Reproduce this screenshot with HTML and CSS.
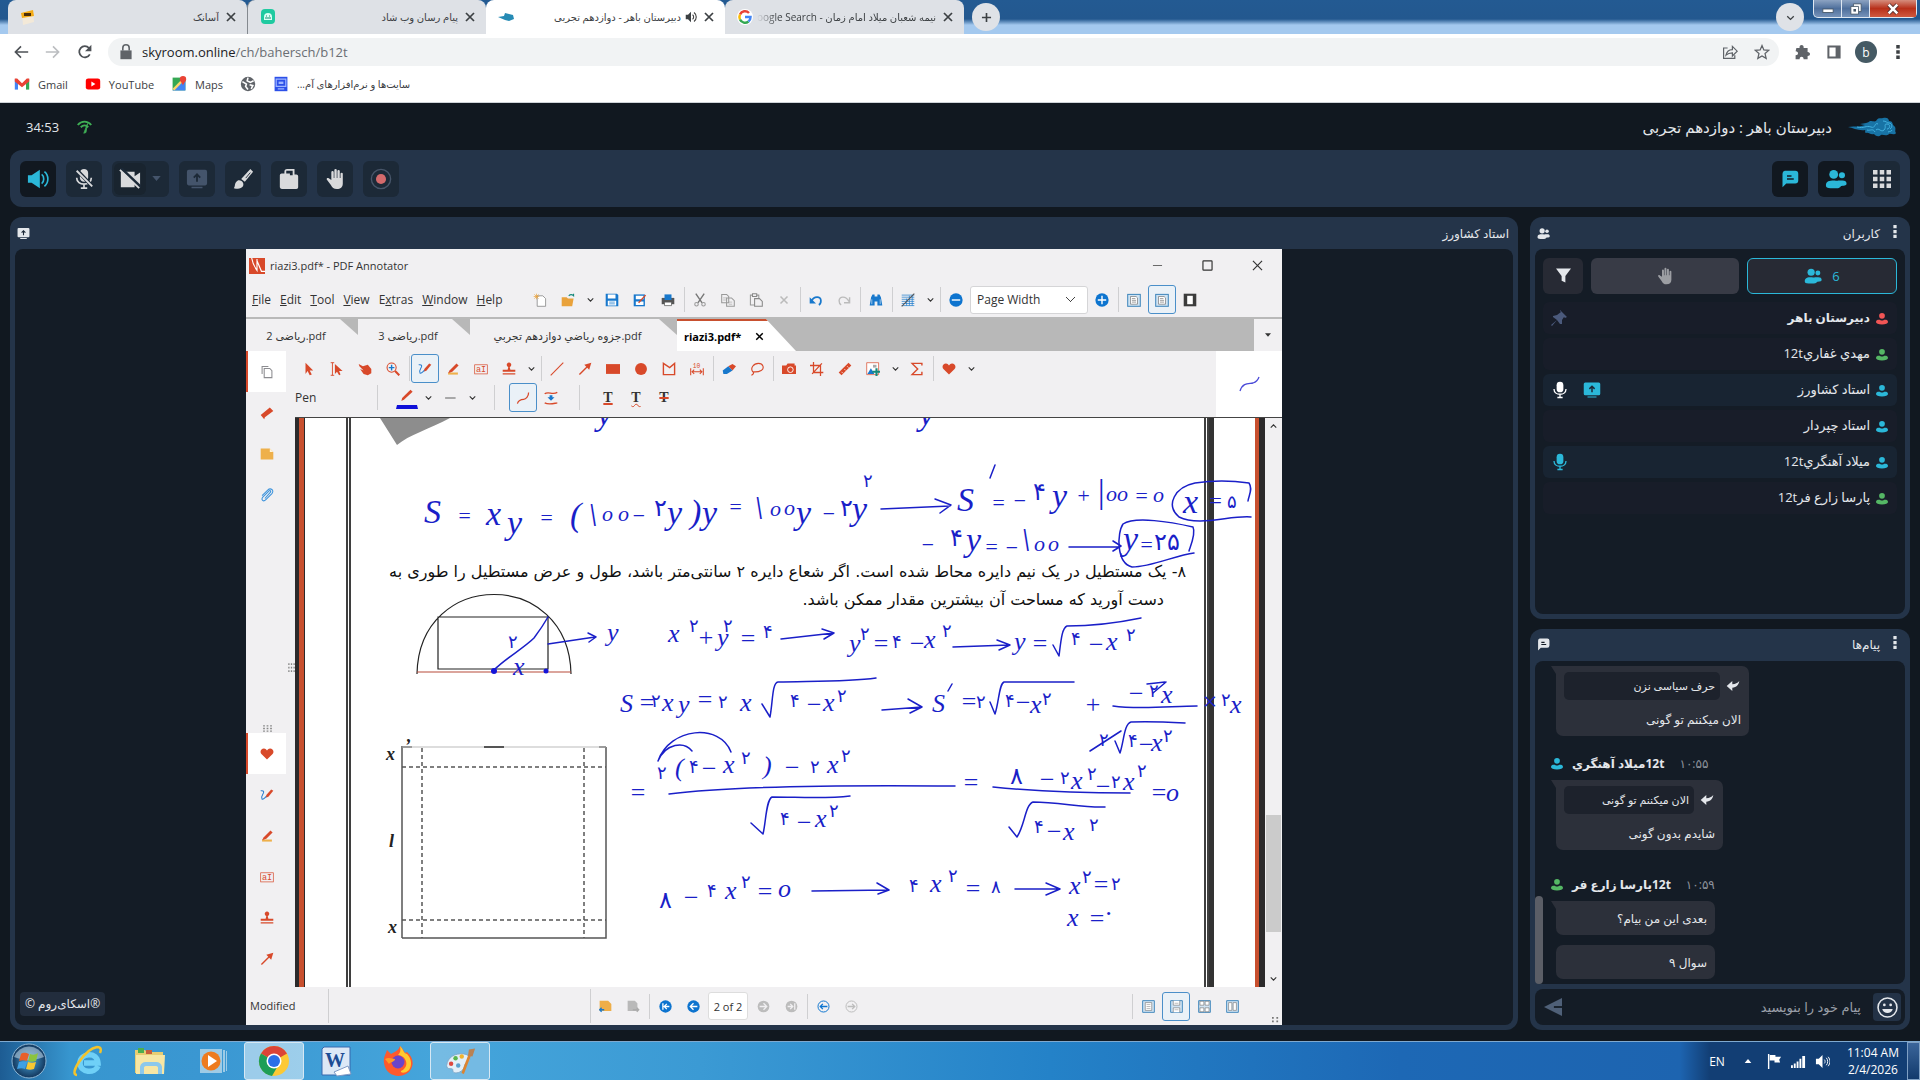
FILE: index.html
```html
<!DOCTYPE html>
<html lang="fa">
<head>
    <meta charset="UTF-8">
    <meta name="viewport" content="width=device-width, initial-scale=1.0">
    <title>دبیرستان باهر - دوازدهم تجربی</title>
    <link rel="stylesheet" href="styles.css">
</head>
<body>
    <!-- shared icons -->
    <svg class="sprite" aria-hidden="true">
        <symbol id="i-close" viewBox="0 0 20 20"><path d="M5 5l10 10M15 5L5 15" fill="none" stroke="currentColor" stroke-width="2.2"/></symbol>
        <symbol id="i-chev" viewBox="0 0 20 20"><path d="M5 8l5 5 5-5" fill="none" stroke="currentColor" stroke-width="2"/></symbol>
        <symbol id="i-users" viewBox="0 0 24 24"><circle cx="9.500" cy="7" r="4.800"/><circle cx="18.500" cy="8" r="3.300"/><path d="M1 19c0-5 4-5.500 8.500-5.500 3 0 3.500 1 5 0h4.500c3 0 4.500 1 4.500 3.500 0 2-1.500 2.500-5.500 2.500-1 0-1.500 2.500-5 2.500H6c-3.500 0-5-1-5-3z"/></symbol>
        <symbol id="i-user" viewBox="0 0 20 20"><circle cx="10" cy="5.500" r="4.800"/><path d="M0 16c0-3 2-4 5-4 2 0 3 1.300 5 1.300S13 12 15 12c3 0 5 1 5 4 0 2.500-4 4-10 4S0 18.500 0 16z"/></symbol>
        <symbol id="i-chat" viewBox="0 0 24 24"><path d="M5 1h14a4 4 0 0 1 4 4v9a4 4 0 0 1-4 4H7l-5 5V5a4 4 0 0 1 3-4z"/><path d="M8 8h6M8 12h9" stroke="#141c26" stroke-width="2"/></symbol>
        <symbol id="i-hand" viewBox="0 0 24 24"><path d="M8 13V4.500a1.300 1.300 0 0 1 2.600 0V11h.7V2.300a1.300 1.300 0 0 1 2.600 0V11h.7V3.500a1.300 1.300 0 0 1 2.600 0V11h.8V6a1.300 1.300 0 0 1 2.500 0v11c0 4-2.500 6-6.500 6-3.500 0-5-1.500-6.500-4.500L3 12.500c-.5-1.500 1-2.300 2.200-1.200z"/></symbol>
        <symbol id="i-mic" viewBox="0 0 24 24"><rect x="7.500" y="1" width="9" height="14" rx="4.500"/><path d="M4 10.500c0 9.500 16 9.500 16 0M12 18v4M8.500 22h7" fill="none" stroke="currentColor" stroke-width="1.800"/></symbol>
        <symbol id="i-share" viewBox="0 0 24 24"><path d="M3 2h18a2 2 0 0 1 2 2v13a2 2 0 0 1-2 2H3a2 2 0 0 1-2-2V4a2 2 0 0 1 2-2zM6 20.500h12V22H6z"/><path d="M12 15V7M8.500 10.500L12 7l3.500 3.500" fill="none" stroke="#1c2937" stroke-width="2"/></symbol>
        <symbol id="i-dots" viewBox="0 0 4 16"><path d="M0 0h4v4H0zM0 6h4v4H0zM0 12h4v4H0z"/></symbol>
        <symbol id="i-reply" viewBox="0 0 20 20"><path d="M1 10l8-7v4.500c5 0 7-1.500 10-4.500-1 6-4 9-10 9.500V17z"/></symbol>
        <symbol id="p-pen" viewBox="0 0 20 20"><path d="M8 14l1-4 7-8 3 2-7 8.500z" fill="#d8492a"/><path d="M1 4c5-1 5 2 3 5s-2 5-1 7c2 1 3-1 6-4" fill="none" stroke="#2b7fd0" stroke-width="1.500"/></symbol>
        <symbol id="p-mark" viewBox="0 0 20 20"><path d="M3 15h14v3H3z" fill="#eeb04b"/><path d="M5 12L15 2l3 3-9 9-6 2z" fill="#d8492a"/></symbol>
        <symbol id="p-text" viewBox="0 0 20 20"><rect x="1" y="4" width="18" height="13" fill="none" stroke="#d8492a"/><text x="3" y="14" class="gl">aI</text></symbol>
        <symbol id="p-stamp" viewBox="0 0 20 20"><path d="M1 16h18v2H1zM1 14v-3h7l1-4a3.200 3.200 0 1 1 2 0l1 4h7v3z" fill="#d8492a"/></symbol>
        <symbol id="p-arrow" viewBox="0 0 20 20"><path d="M2 18L15 5" stroke="#d8492a" stroke-width="2"/><path d="M19 1l-3 10-7-7z" fill="#d8492a"/></symbol>
        <symbol id="p-heart" viewBox="0 0 20 20"><path d="M10 18L2 10C-1 6 2 2 5.500 2 8 2 9.500 4 10 5c.5-1 2-3 4.500-3C18 2 21 6 18 10z" fill="#d8492a"/></symbol>
        <symbol id="p-copy" viewBox="0 0 20 20"><path d="M3 13V2h9M6 5h8l3 3v10H6z" fill="none" stroke="#8c8c90" stroke-width="1.500"/></symbol>
        <symbol id="p-page" viewBox="0 0 20 20"><rect x="1" y="2" width="18" height="17" fill="#cfe3f3" stroke="#4489bd" stroke-width="1.500"/><path d="M5 5h8l2 2v9H5z" fill="#fff" stroke="#777"/><path d="M7 8h5M7 10.500h6M7 13h6" stroke="#777"/></symbol>
    </svg>

    <header class="browser">
        <div class="tab-strip">
            <div class="tab">
                <svg class="favicon" viewBox="0 0 16 16"><path d="M2 4l11-3 1 12-11 3z" fill="#f3e9d8"/><path d="M1 4l12-3 1 6L2 9z" fill="#f3ab16"/><path d="M4 4h7v3H4z" fill="#4b2d08"/></svg>
                <span class="tab-title" dir="rtl">آسانک</span>
                <button class="tab-x" aria-label="Close tab"><svg><use href="#i-close"/></svg></button>
            </div>
            <div class="tab tab-line">
                <svg class="favicon" viewBox="0 0 16 16"><rect x="1" width="14" height="15" rx="4" fill="#1fcaa0"/><path d="M4 8a4 4 0 0 1 8 0v3H4z" fill="#d9fff4"/><path d="M5 9h6M6 7h1M9 7h1" stroke="#178f72"/></svg>
                <span class="tab-title" dir="rtl">پیام رسان وب شاد</span>
                <button class="tab-x" aria-label="Close tab"><svg><use href="#i-close"/></svg></button>
            </div>
            <div class="tab tab-active">
                <svg class="favicon" viewBox="0 0 16 16"><path d="M0 8l6-1 1-3 4 1 4 1 1 4-5 2-4-1z" fill="#268bb5"/></svg>
                <span class="tab-title" dir="rtl">دبیرستان باهر - دوازدهم تجربی</span>
                <svg class="speaker" viewBox="0 0 16 16"><path d="M1 5h3l4-4v14l-4-4H1z"/><path d="M10 5c2 1 2 5 0 6M12 2c4 3 4 9 0 12" fill="none" stroke="#444" stroke-width="1.500"/></svg>
                <button class="tab-x" aria-label="Close tab"><svg><use href="#i-close"/></svg></button>
            </div>
            <div class="tab">
                <svg class="favicon" viewBox="0 0 16 16"><rect width="16" height="16" rx="8" fill="#fff"/><g fill="none" stroke-width="2.500"><path d="M12 4a5.500 5.500 0 0 0-9 1.500" stroke="#ea4335"/><path d="M3 5.500a5.500 5.500 0 0 0 0 5" stroke="#fbbc05"/><path d="M3 10.500a5.500 5.500 0 0 0 8.500 2" stroke="#34a853"/><path d="M11.500 12.500c1.500-1 2-2.500 2-4.500H8" stroke="#4285f4"/></g></svg>
                <span class="tab-title tab-fade" dir="rtl">نیمه شعبان میلاد امام زمان - Google Search</span>
                <button class="tab-x" aria-label="Close tab"><svg><use href="#i-close"/></svg></button>
            </div>
            <button class="round-btn" aria-label="New tab"><svg viewBox="0 0 20 20"><path d="M10 3v14M3 10h14" stroke="#3c4043" stroke-width="2.500"/></svg></button>
            <button class="round-btn tab-search" aria-label="Search tabs"><svg><use href="#i-chev"/></svg></button>
            <div class="win-controls">
                <button aria-label="Minimize"><svg viewBox="0 0 20 14"><rect x="4" y="7" width="12" height="4" fill="#fff" stroke="#456"/></svg></button>
                <button aria-label="Restore"><svg viewBox="0 0 20 14"><path d="M7 1h9v9H7z" fill="#fff" stroke="#456"/><path d="M4 4h9v9H4z" fill="#fff" stroke="#456"/><path d="M7 7h3v3H7z" fill="#456"/></svg></button>
                <button class="win-close" aria-label="Close"><svg viewBox="0 0 20 14"><path d="M5 2l10 10M15 2L5 12" stroke="#533" stroke-width="5"/><path d="M5 2l10 10M15 2L5 12" stroke="#fff" stroke-width="3"/></svg></button>
            </div>
        </div>
        <div class="nav-bar">
            <button aria-label="Back"><svg viewBox="0 0 20 20"><path d="M19 10H3M10 3l-7 7 7 7" fill="none" stroke="#4d5156" stroke-width="2"/></svg></button>
            <button aria-label="Forward"><svg viewBox="0 0 20 20"><path d="M1 10h16M10 3l7 7-7 7" fill="none" stroke="#bbbdc0" stroke-width="2"/></svg></button>
            <button aria-label="Reload"><svg viewBox="0 0 20 20"><path d="M16 13a7 7 0 1 1-1-8l2 2" fill="none" stroke="#4d5156" stroke-width="2.200"/><path d="M18 1v8h-8z" fill="#4d5156"/></svg></button>
            <div class="omnibox">
                <svg viewBox="0 0 20 20"><path d="M3 8h14v11H3z" fill="#5f6368"/><path d="M6 8V5a4 4 0 0 1 8 0v3" fill="none" stroke="#5f6368" stroke-width="2"/></svg>
                <span class="url">skyroom.online<span>/ch/bahersch/b12t</span></span>
                <svg viewBox="0 0 20 20"><path d="M7 5H2v13h14v-4M5 14c1-5 4-7 8-7V3l6 6-6 6v-4c-4 0-6 1-8 3z" fill="none" stroke="#5f6368" stroke-width="1.500"/></svg>
                <svg viewBox="0 0 20 20"><path d="M10 2l2.300 5.500 6 .5-4.500 4 1.400 6L10 15l-5.200 3 1.400-6-4.500-4 6-.5z" fill="none" stroke="#5f6368" stroke-width="1.600"/></svg>
            </div>
            <button aria-label="Extensions"><svg viewBox="0 0 20 20"><path d="M3 5h4c-1-5 6-5 5 0h5v5c4 0 4 5 0 5v4h-5c0-4-5-4-5 0H2v-5c4 0 4-5 0-5z" fill="#5f6368"/></svg></button>
            <button aria-label="Side panel"><svg viewBox="0 0 20 20"><path d="M3 3h14v14H3z" fill="none" stroke="#5f6368" stroke-width="2.500"/><path d="M12 3h5v14h-5z" fill="#5f6368"/></svg></button>
            <button class="avatar">b</button>
            <button aria-label="Menu"><svg class="kebab"><use href="#i-dots"/></svg></button>
        </div>
        <nav class="bookmarks">
            <a href="#"><svg viewBox="0 0 20 16"><path d="M1 15V2h4v13z" fill="#4285f4"/><path d="M15 15V2h4v13z" fill="#34a853"/><path d="M1 5V1h3l6 6 6-6h3v4l-9 7z" fill="#ea4335"/></svg>Gmail</a>
            <a href="#"><svg viewBox="0 0 20 16"><rect x="1" y="1" width="18" height="14" rx="3" fill="#f00"/><path d="M8 5v6l5-3z" fill="#fff"/></svg>YouTube</a>
            <a href="#"><svg viewBox="0 0 20 20"><path d="M2 2h16v16H2z" fill="#34a853"/><path d="M2 18L18 3v15z" fill="#4285f4"/><path d="M3 17L17 3" stroke="#fbd66b" stroke-width="3"/><path d="M15 0a4 4 0 0 1 4 4c0 3-3 4-4 8-1-4-4-5-4-8a4 4 0 0 1 4-4z" fill="#ea4335"/></svg>Maps</a>
            <a href="#" aria-label="Bookmark"><svg viewBox="0 0 20 20"><circle cx="10" cy="10" r="9" fill="#5f6368"/><path d="M3 7l5 3-1 3 3 4M10 2l-1 4 4 2 4-2M12 11l4 1-2 4" fill="none" stroke="#fff" stroke-width="2"/></svg></a>
            <a href="#"><svg viewBox="0 0 20 20"><path d="M2 1h16v18H2z" fill="#2c50e8"/><path d="M4 4h12v9H4zM6 16h8" fill="none" stroke="#9fb6ff" stroke-width="1.500"/><path d="M7 7h6v3H7z" fill="#9fb6ff"/></svg><span dir="rtl">سایت‌ها و نرم‌افزارهای آم...</span></a>
        </nav>
    </header>

    <main class="room">
        <div class="room-head">
            <span class="timer">34:53</span>
            <svg class="signal" viewBox="0 0 20 20"><path d="M1 8c5-6 13-6 18 0M5 11c3-3 7-3 10 0" fill="none" stroke="#3fae55" stroke-width="2.500"/><path d="M9 19l5-13-2 12z" fill="#3fae55" stroke="#3fae55"/></svg>
            <h1 dir="rtl">دبیرستان باهر : دوازدهم تجربی</h1>
            <svg class="logo" viewBox="0 0 50 20"><path d="M1 10c8-1 12 0 17-2-2 0-4-1-5-1 5-1 8-1 10-3 3 0 4 1 6 0 2-4 5-2 7-3 3-1 6 0 6 3 4 0 3 3 5 5 3 2 0 5 2 7-2 3-5 0-7 1-3 3-6 0-8 1-3 3-6 0-7-1-4 1-5-2-8-1-2-1 0-2-1-3-6 1-12-2-17-3z" fill="#1873a5"/><path d="M10 10c7 2 9-2 14 0s3-5 7-3M29 13c3-3 5 3 8 0s-1-6 3-6 3 5 0 5M36 4c3 0 4 2 6 2 3 0 4 4 1 6M20 13c3 1 6-2 8 2M41 15c2-1 3 0 4-2" fill="none" stroke="#42b1df"/></svg>
        </div>

        <div class="toolbar">
            <button class="tool on" aria-label="Speaker"><svg class="big" viewBox="0 0 24 24"><path d="M1 8h4l9-6v20l-9-6H1z"/><path d="M16 7c3 2 3 8 0 10M19 4c5 4 5 12 0 16" fill="none" stroke="currentColor" stroke-width="1.800"/></svg></button>
            <button class="tool" aria-label="Microphone"><svg class="big" viewBox="0 0 24 24"><use href="#i-mic"/><path d="M3 1l19 20" stroke="#1c2937" stroke-width="4"/><path d="M4 3l17 17" stroke="currentColor" stroke-width="2"/></svg></button>
            <div class="tool tool-wide">
                <button class="tool-inner" aria-label="Camera"><svg class="big" viewBox="0 0 24 24"><path d="M2 4h15v5l6-4v14l-6-4v6H2z"/><path d="M2 0l22 21" stroke="#1c2937" stroke-width="3"/><path d="M1 2l21 20" stroke="currentColor" stroke-width="2"/></svg></button>
                <svg class="caret" viewBox="0 0 10 6"><path d="M0 0h10L5 6z"/></svg>
            </div>
            <button class="tool dim" aria-label="Share screen"><svg class="big"><use href="#i-share"/></svg></button>
            <button class="tool" aria-label="Whiteboard"><svg class="big" viewBox="0 0 24 24"><path d="M2 22c2-2 0-5 4-8 3-2 8 2 6 6-2 3-6 3-10 2z"/><path d="M10 12L20 1l3 3-9 11z"/><path d="M15 11l5-6" stroke="#1c2937"/></svg></button>
            <button class="tool" aria-label="Files"><svg class="big" viewBox="0 0 24 24"><path d="M4 6h3V4a3 3 0 0 1 3-3h8v6h2a2 2 0 0 1 2 2v12a2 2 0 0 1-2 2H5a3 3 0 0 1-3-2V8a2 2 0 0 1 2-2z"/><path d="M9 6V3h7v5h-3v-2z" fill="#1c2937"/></svg></button>
            <button class="tool" aria-label="Raise hand"><svg class="big"><use href="#i-hand"/></svg></button>
            <button class="tool" aria-label="Record"><svg class="big" viewBox="0 0 24 24"><circle cx="12" cy="12" r="10.500" fill="none" stroke="#48566a" stroke-width="1.500"/><circle cx="12" cy="12" r="5.500" fill="#d46a6c"/></svg></button>
            <span class="push"></span>
            <button class="tool on" aria-label="Messages"><svg><use href="#i-chat"/></svg></button>
            <button class="tool on" aria-label="Users"><svg class="big"><use href="#i-users"/></svg></button>
            <button class="tool" aria-label="Layout"><svg viewBox="0 0 16 16"><path d="M0 0h4v4H0zM6 0h4v4H6zM12 0h4v4h-4zM0 6h4v4H0zM6 6h4v4H6zM12 6h4v4h-4zM0 12h4v4H0zM6 12h4v4H6zM12 12h4v4h-4z"/></svg></button>
        </div>

        <div class="panes">
            <section class="panel stage">
                <div class="panel-head">
                    <svg><use href="#i-share"/></svg>
                    <h2 dir="rtl">استاد کشاورز</h2>
                </div>
                <div class="panel-body stage-body">
                    <span class="brand">© اسکای‌روم®</span>

                    <div class="annotator">
                        <div class="an-title">
                            <svg class="an-logo" viewBox="0 0 18 18"><path d="M0 0h18v18H0z" fill="#d8492a"/><path d="M3 0c1 6 3 10 6 14V1M9 3l5 12h4" fill="none" stroke="#fff" stroke-width="1.300"/></svg>
                            <span>riazi3.pdf* - PDF Annotator</span>
                            <span class="push"></span>
                            <button aria-label="Minimize"><svg viewBox="0 0 20 20"><path d="M3 10h14" stroke="#666" stroke-width="1.500"/></svg></button>
                            <button aria-label="Maximize"><svg viewBox="0 0 20 20"><rect x="3" y="3" width="14" height="14" rx="1" fill="none" stroke="#333" stroke-width="1.800"/></svg></button>
                            <button aria-label="Close"><svg viewBox="0 0 20 20"><path d="M3 3l14 14M17 3L3 17" stroke="#333" stroke-width="1.800"/></svg></button>
                        </div>
                        <div class="an-bar an-menu">
                            <nav>
                                <a href="#"><u>F</u>ile</a><a href="#"><u>E</u>dit</a><a href="#"><u>T</u>ool</a><a href="#"><u>V</u>iew</a><a href="#">E<u>x</u>tras</a><a href="#"><u>W</u>indow</a><a href="#"><u>H</u>elp</a>
                            </nav>
                            <button aria-label="New"><svg viewBox="0 0 20 20"><path d="M6 4h8l4 4v11H6z" fill="#fff" stroke="#777"/><path d="M5 1v8M1 5h8M2 2l6 6M8 2L2 8" stroke="#e9a23b"/></svg></button>
                            <button aria-label="Open"><svg viewBox="0 0 20 20"><path d="M1 6h7l2 2h8l-2 11H1z" fill="#e9a23b"/><path d="M11 4c3-3 5-2 7 0V1" fill="none" stroke="#16897a" stroke-width="1.500"/></svg></button>
                            <i class="chev"><svg><use href="#i-chev"/></svg></i>
                            <button aria-label="Save"><svg viewBox="0 0 20 20"><path d="M1 1h16l2 2v16H1z" fill="#1878cc"/><path d="M4 2h11v6H4zM4 11h12v7H4z" fill="#fff"/><path d="M6 13h8M6 15.500h8" stroke="#1878cc"/></svg></button>
                            <button aria-label="Save as"><svg viewBox="0 0 20 20"><path d="M1 2h16v17H1z" fill="#1878cc"/><path d="M4 4h11v5H4zM4 12h11v5H4z" fill="#fff"/><path d="M8 14L18 3" stroke="#d8492a" stroke-width="2"/></svg></button>
                            <button aria-label="Print"><svg viewBox="0 0 20 20"><path d="M1 7h18v9H1z" fill="#555"/><path d="M5 2h10v8H5z" fill="#1878cc"/><path d="M5 13h10v5H5z" fill="#fff" stroke="#555"/></svg></button>
                            <i class="sep"></i>
                            <button aria-label="Cut"><svg viewBox="0 0 20 20"><path d="M4 1l9 13M16 1L7 14" stroke="#777" stroke-width="2"/><circle cx="5" cy="16" r="2.500" fill="none" stroke="#999" stroke-width="1.500"/><circle cx="15" cy="16" r="2.500" fill="none" stroke="#999" stroke-width="1.500"/></svg></button>
                            <button aria-label="Copy"><svg viewBox="0 0 20 20"><path d="M1 2h7l3 3v9H1zM8 7h7l4 4v8H8z" fill="#f1f0f2" stroke="#999" stroke-width="1.500"/><path d="M3 7h5M3 10h4M11 13h5M11 16h5" stroke="#aaa"/></svg></button>
                            <button aria-label="Paste"><svg viewBox="0 0 20 20"><path d="M2 3h12v14H2z" fill="none" stroke="#999" stroke-width="1.500"/><path d="M5 1h6v4H5zM8 8h7l4 4v7H8z" fill="#f1f0f2" stroke="#888" stroke-width="1.500"/></svg></button>
                            <button aria-label="Delete"><svg class="gray"><use href="#i-close"/></svg></button>
                            <i class="sep"></i>
                            <button aria-label="Undo"><svg viewBox="0 0 20 20"><path d="M3 12c4-8 14-8 14-1 0 3-1 5-3 6" fill="none" stroke="#1878cc" stroke-width="2.500"/><path d="M1 6v9h9z" fill="#1878cc"/></svg></button>
                            <button aria-label="Redo"><svg viewBox="0 0 20 20"><path d="M17 12c-4-8-14-8-14-1 0 3 1 5 3 6M18 6v8h-8" fill="none" stroke="#bbb" stroke-width="2"/></svg></button>
                            <i class="sep"></i>
                            <button aria-label="Find"><svg viewBox="0 0 20 20"><path d="M1 18l2-12 2-4h3v3h4V2h3l2 4 2 12h-7v-6H8v6z" fill="#1878cc"/><path d="M4 9v7M16 9v7" stroke="#cfe3f3"/></svg></button>
                            <i class="sep"></i>
                            <button aria-label="Grid"><svg viewBox="0 0 20 20"><path d="M1 3h18M1 6h18M1 9h18M1 12h18M1 15h18M1 18h18M8 8v10M12 4v14M16 3v15" stroke="#1878cc"/><path d="M1 19L19 1" stroke="#555" stroke-width="1.500"/></svg></button>
                            <i class="chev"><svg><use href="#i-chev"/></svg></i>
                            <i class="sep"></i>
                            <button aria-label="Zoom out"><svg viewBox="0 0 20 20"><circle cx="10" cy="10" r="9.500" fill="#0d74cf"/><path d="M4 10h12" stroke="#fff" stroke-width="2"/></svg></button>
                            <select aria-label="Zoom"><option>Page Width</option></select>
                            <button aria-label="Zoom in"><svg viewBox="0 0 20 20"><circle cx="10" cy="10" r="9.500" fill="#0d74cf"/><path d="M4 10h12M10 4v12" stroke="#fff" stroke-width="2"/></svg></button>
                            <i class="sep"></i>
                            <button aria-label="Full page"><svg><use href="#p-page"/></svg></button>
                            <button class="sel" aria-label="Page width"><svg><use href="#p-page"/></svg></button>
                            <button aria-label="Full screen"><svg viewBox="0 0 20 20"><path d="M1 1h18v18H1z" fill="#3c3c3c"/><path d="M6 4h8v12H6z" fill="#fff"/></svg></button>
                        </div>
                        <div class="an-tabs">
                            <a class="an-tab tab-a" href="#">ریاضی 2.pdf</a>
                            <a class="an-tab tab-a" href="#">ریاضی 3.pdf</a>
                            <a class="an-tab tab-c" href="#">جزوه ریاضي دوازدهم تجربي.pdf</a>
                            <a class="an-tab an-current" href="#">riazi3.pdf* <svg><use href="#i-close"/></svg></a>
                            <span class="push"></span>
                            <button class="an-more" aria-label="All tabs"><svg viewBox="0 0 10 6"><path d="M0 0h10L5 6z"/></svg></button>
                        </div>
                        <div class="an-main">
                            <aside class="an-side">
                                <button class="side-on" aria-label="Pages"><svg><use href="#p-copy"/></svg></button>
                                <button aria-label="Bookmarks"><svg viewBox="0 0 20 20"><path d="M1 13L14 2l5 5-12 9-1 3z" fill="#d8492a"/></svg></button>
                                <button aria-label="Notes"><svg viewBox="0 0 20 20"><path d="M1 2h13l5 5v11H1z" fill="#eeb04b"/><path d="M14 2v5h5" fill="#fff3d8"/></svg></button>
                                <button aria-label="Attachments"><svg viewBox="0 0 20 20"><path d="M7 15l8-9c1-2-1-3-2-2l-9 9c-3 4 1 7 4 4l9-9c4-5-2-9-6-5l-8 8" fill="none" stroke="#3d93dc" stroke-width="1.500"/></svg></button>
                                <span class="push"></span>
                                <svg class="grip" viewBox="0 0 12 8"><path d="M1 1h10M1 4h10M1 7h10" stroke="#888" stroke-width="1.500" stroke-dasharray="2 2"/></svg>
                                <button class="side-on" aria-label="Favorites"><svg><use href="#p-heart"/></svg></button>
                                <button aria-label="Pen"><svg><use href="#p-pen"/></svg></button>
                                <button aria-label="Marker"><svg><use href="#p-mark"/></svg></button>
                                <button aria-label="Text"><svg><use href="#p-text"/></svg></button>
                                <button aria-label="Stamp"><svg><use href="#p-stamp"/></svg></button>
                                <button aria-label="Arrow"><svg><use href="#p-arrow"/></svg></button>
                            </aside>
                            <div class="an-work">
                                <div class="an-tools">
                                    <div class="an-rows">
                                        <div class="an-bar">
                                            <button aria-label="Select"><svg viewBox="0 0 20 20"><path d="M5 1l11 11h-5l3 6-3 1-3-6-3 4z" fill="#d8492a"/></svg></button>
                                            <button aria-label="Select text"><svg viewBox="0 0 20 20"><path d="M1 1h5M1 19h5M3.500 1v18" stroke="#d8492a" stroke-width="1.300"/><path d="M7 3l11 10h-5l2 5-2 1-3-5-3 3z" fill="#d8492a"/></svg></button>
                                            <button aria-label="Pan"><svg viewBox="0 0 20 20"><path d="M1 3l6 3 7-2 5 6v6l-5 3-6-2-5-7 5 2-6-6z" fill="#d8492a"/></svg></button>
                                            <button aria-label="Zoom"><svg viewBox="0 0 20 20"><circle cx="8" cy="8" r="6.500" fill="none" stroke="#d8492a" stroke-width="1.500"/><path d="M13 13l6 6" stroke="#d8492a" stroke-width="3"/><path d="M4 8h8M8 4v8" stroke="#1878cc" stroke-width="2"/></svg></button>
                                            <i class="sep"></i>
                                            <button class="sel" aria-label="Pen"><svg><use href="#p-pen"/></svg></button>
                                            <button aria-label="Marker"><svg><use href="#p-mark"/></svg></button>
                                            <button aria-label="Text"><svg><use href="#p-text"/></svg></button>
                                            <button aria-label="Stamp"><svg><use href="#p-stamp"/></svg></button>
                                            <i class="chev"><svg><use href="#i-chev"/></svg></i>
                                            <i class="sep"></i>
                                            <button aria-label="Line"><svg viewBox="0 0 20 20"><path d="M1 19L19 1" stroke="#d8492a" stroke-width="1.500"/></svg></button>
                                            <button aria-label="Arrow"><svg><use href="#p-arrow"/></svg></button>
                                            <button aria-label="Rectangle"><svg viewBox="0 0 20 20"><path d="M0 3h20v14H0z" fill="#d8492a"/></svg></button>
                                            <button aria-label="Ellipse"><svg viewBox="0 0 20 20"><circle cx="10" cy="10" r="8.500" fill="#d8492a"/></svg></button>
                                            <button aria-label="Polygon"><svg viewBox="0 0 20 20"><path d="M2 2l9 6 7-6v16H2z" fill="none" stroke="#d8492a" stroke-width="2"/></svg></button>
                                            <button aria-label="Measure"><svg viewBox="0 0 20 20"><text x="4" y="8" class="gl gl-s">10</text><path d="M1 9v10M19 9v10M3 14h14M6 11l-3 3 3 3M14 11l3 3-3 3" fill="none" stroke="#d8492a" stroke-width="1.500"/></svg></button>
                                            <i class="sep"></i>
                                            <button aria-label="Eraser"><svg viewBox="0 0 20 20"><path d="M9 6l6-3 5 3-5 6z" fill="#d8492a"/><path d="M1 12l8-6 6 6-8 5-5 0z" fill="#1878cc"/></svg></button>
                                            <button aria-label="Lasso"><svg viewBox="0 0 20 20"><path d="M4 14c-4-5 1-12 8-12s9 7 4 10-9 2-12 2c2 1 1 4-2 5" fill="none" stroke="#d8492a" stroke-width="1.600"/></svg></button>
                                            <i class="sep"></i>
                                            <button aria-label="Snapshot"><svg viewBox="0 0 20 20"><path d="M0 5h6l2-3h10v3h2v12H0z" fill="#d8492a"/><circle cx="12" cy="11" r="4" fill="#d8492a" stroke="#fff" stroke-width="1.300"/></svg></button>
                                            <button aria-label="Crop"><svg viewBox="0 0 20 20"><path d="M5 0v15h14M0 5h15v15M3 17L17 2" fill="none" stroke="#d8492a" stroke-width="1.800"/></svg></button>
                                            <button aria-label="Ruler"><svg viewBox="0 0 20 20"><path d="M1 15L15 1l4 4L5 19z" fill="#d8492a"/><path d="M5 14l2 2M9 10l2 2M13 6l2 2" stroke="#fff"/></svg></button>
                                            <button aria-label="Picture"><svg viewBox="0 0 20 20"><path d="M1 1h17v17H1z" fill="#fff" stroke="#d8492a"/><path d="M2 17l5-8 5 8z" fill="#1878cc"/><path d="M10 4h5v4h-5z" fill="#aaa"/><path d="M15 9v11M9 14h11" stroke="#16897a" stroke-width="3"/></svg></button>
                                            <i class="chev"><svg><use href="#i-chev"/></svg></i>
                                            <button aria-label="Formula"><svg viewBox="0 0 20 20"><path d="M17 5V2H3l8 8-8 8h14v-4" fill="none" stroke="#d8492a" stroke-width="2"/></svg></button>
                                            <i class="sep"></i>
                                            <button aria-label="Favorites"><svg><use href="#p-heart"/></svg></button>
                                            <i class="chev"><svg><use href="#i-chev"/></svg></i>
                                        </div>
                                        <div class="an-bar">
                                            <span class="pen-name">Pen</span>
                                            <i class="sep"></i>
                                            <button class="ink-color" aria-label="Color"><svg viewBox="0 0 20 20"><path d="M3 13L15 1l3 3L6 15l-4 2z" fill="#d8492a"/></svg></button>
                                            <i class="chev"><svg><use href="#i-chev"/></svg></i>
                                            <button aria-label="Width"><svg viewBox="0 0 20 20"><path d="M3 10h15" stroke="#666" stroke-width="1.500"/></svg></button>
                                            <i class="chev"><svg><use href="#i-chev"/></svg></i>
                                            <i class="sep wide"></i>
                                            <button class="sel" aria-label="Freehand"><svg viewBox="0 0 20 20"><path d="M2 18c2-6 6-6 9-6s7-4 7-10" fill="none" stroke="#d8492a" stroke-width="1.800"/></svg></button>
                                            <button aria-label="Smooth"><svg viewBox="0 0 20 20"><path d="M1 4c5-4 11 2 18-2M1 17c6 3 12 1 18 0" fill="none" stroke="#d8492a" stroke-width="2"/><path d="M8 6h4v3h3l-5 5-5-5h3z" fill="#1878cc"/></svg></button>
                                            <i class="sep wide"></i>
                                            <button class="t-under">T</button>
                                            <button class="t-wavy">T</button>
                                            <button class="t-strike">T</button>
                                        </div>
                                    </div>
                                    <svg class="an-preview" viewBox="0 0 66 66"><path d="M24 40c3-9 9-7 13-8 3-1 5-3 6-6" fill="none" stroke="#4a4ad8" stroke-width="1.300"/></svg>
                                </div>
                                <div class="an-doc">
                                    <svg class="sheet" viewBox="295 418 970 569" preserveAspectRatio="xMidYMin slice">
                                        <path d="M295 418h970v569H295z" fill="#2c2a2b"/>
                                        <path d="M299 418h5v569h-5zM1255 418h4v569h-4z" fill="#c8502f"/>
                                        <path d="M305 418h950v569H305z" fill="#fff"/>
                                        <path d="M347 418v569M350 418v569M1205 418v569M1208 418v569" stroke="#000" stroke-width="1.500"/>
                                        <path d="M1209 418h5v569h-5z"/>
                                        <path d="M380 418l17 27c12-10 32-16 53-27z" fill="#8d8d8d"/>
                                        <!-- printed question -->
                                        <g class="print" direction="rtl">
                                            <text x="1186" y="577">۸- یک مستطیل در یک نیم دایره محاط شده است. اگر شعاع دایره ۲ سانتی‌متر باشد، طول و عرض مستطیل را طوری به</text>
                                            <text x="1164" y="605">دست آورید که مساحت آن بیشترین مقدار ممکن باشد.</text>
                                        </g>
                                        <!-- half circle figure -->
                                        <g fill="none" stroke="#222" stroke-width="1.200">
                                            <path d="M417 674c2-106 152-106 154 0M438 617h110v52H438z"/>
                                            <path d="M417 672h154" stroke="#b84b3b"/>
                                        </g>
                                        <!-- box figure -->
                                        <g fill="none" stroke="#555" stroke-width="1.500">
                                            <path d="M402 746v192M402 938h204V747M402 747h10M599 747h7"/>
                                            <path d="M402 747h204" stroke="#bbb" stroke-width="1"/>
                                            <path d="M484 747h20" stroke-width="2"/>
                                            <path d="M402 767h204M402 920h204M422 748v190M584 748v190" stroke-dasharray="4 3"/>
                                        </g>
                                        <g class="label"><text x="386" y="760">x</text><text x="389" y="847">l</text><text x="388" y="933">x</text><text x="407" y="742">,</text></g>
                                        <!-- ink: arrows, roots, fraction bars, outlines -->
                                        <g class="stroke">
                                            <path d="M881 509l69-3M935 499l16 6-11 8M990 478l5-13M1069 547h50M1113 541l8 5-8 5"/>
                                            <path d="M1251 517c-20-2-52 10-72 0-14-12-4-30 16-34 20-3 40-2 54 0 4 6 0 12-1 18"/>
                                            <path d="M1194 553c-18 2-42 14-62 14-16-4-15-34-9-43 12-8 48-2 70 3 3 6-2 18-4 24"/>
                                            <path d="M494 670c12-12 30-22 40-32 6-8 10-14 14-21M548 644l47-7M588 633l8 4-7 5"/>
                                            <path d="M781 639l53-6M822 629l12 4-10 6M953 647l56-2M997 640l13 5-11 5"/>
                                            <path d="M1053 645l6 11c2-16 3-28 8-30 20 0 50-3 74-8"/>
                                            <path d="M762 704l8 13c3-16 2-34 8-35 30-1 70 0 98-4M990 702l5 12c4-12 4-30 9-32h70M882 710l40-3M908 699l14 8-12 6"/>
                                            <path d="M952 684l-4 7M1113 706c26 4 60 0 84 0M1147 684l18-2M1153 693l13-11"/>
                                            <path d="M1090 751l31-20M1115 741l5 12c4-12 4-29 11-31 18-1 36 0 54 1"/>
                                            <path d="M658 761c8-18 26-20 34-10M658 761c12-34 62-38 73-9M669 794c60-8 180-9 286-8"/>
                                            <path d="M751 823l12 11c3-12 3-34 9-37 26 0 54 2 78-1M993 787c40 4 90 6 137 6M1009 827l8 10c8-12 8-32 16-35 26 0 50 6 72 5"/>
                                            <path d="M812 891l76-1M877 883l12 7-11 4M1015 889h44M1046 883l14 6-14 6"/>
                                        </g>
                                        <circle cx="494" cy="671" r="3" class="dot"/><circle cx="546" cy="671" r="2.500" class="dot"/>
                                        <!-- ink: letters -->
                                        <g class="ink ink-l">
                                            <text x="424 486 507 570 588 667 690 702 754 796 852" y="523 525 534 526 526 524 523 524 519 524 520">Sxy(\y)y\yy</text>
                                            <text x="957 1052 1096 1183" y="511 507 503 513">Sy|x</text>
                                            <text x="966 1021 1123" y="551 551 550">y\y</text>
                                            <text x="597 919" y="425 425">yy</text>
                                        </g>
                                        <g class="ink ink-s">
                                            <text x="457 539 631 728 821" y="523 525 523 514 521">==−=−</text>
                                            <text x="991 1012 1076 1134 1208" y="510 508 503 503 508">=−+==</text>
                                            <text x="920 984 1004 1139" y="552 554 555 552">−=−=</text>
                                            <text x="602 618 770 784" y="521 521 516 515">oooo</text>
                                            <text x="1106 1117 1153" y="501 501 502">ooo</text>
                                            <text x="1034 1048" y="551 551">oo</text>
                                        </g>
                                        <g class="ink">
                                            <text x="607 668 697 717 739 849 872 908 924 1014 1031 1087 1106" y="641 642 646 646 647 652 652 652 648 650 652 653 650">yx+y=y=−xy=−x</text>
                                            <text x="513" y="675">x</text>
                                            <text x="620 638 662 678 696 740 805 823 932 960 1014 1030 1084 1127 1161 1201 1230" y="712 711 711 713 708 711 713 711 712 710 711 713 713 702 703 710 713">S=xy=x−xS=−x+−x×x</text>
                                            <text x="629 675 700 723 763 783 827 795 815" y="801 776 777 773 774 776 773 831 827">=(−x)−x−x</text>
                                            <text x="962 1038 1071 1094 1123 1150 1166 1045 1063 1137 1151" y="791 788 789 795 790 801 801 840 840 753 751">=−x−x=o−x−x</text>
                                            <text x="682 725 756 778 930 964 1069 1092 1067 1088 1105" y="906 899 900 897 892 897 894 893 926 927 922">−x=ox=x=x=·</text>
                                        </g>
                                        <!-- ink: digits -->
                                        <g class="digits">
                                            <text x="863 1227" y="487 508">۲۵</text>
                                            <text x="508 689 723 763 860 892 942 1071 1126" y="648 632 632 638 640 648 637 645 641">۲۲۲۴۲۴۲۴۲</text>
                                            <text x="651 718 790 837 976 1005 1042 1149 1221" y="707 708 707 702 708 707 705 697 706">۲۲۴۲۲۴۲۲۲</text>
                                            <text x="657 689 741 810 841 780 829" y="779 773 764 773 762 825 817">۲۴۲۲۲۴۲</text>
                                            <text x="1060 1087 1111 1137 1034 1089 1099 1128 1163" y="784 780 788 777 833 831 746 747 742">۲۲۲۲۴۲۲۴۲</text>
                                            <text x="707 741 909 948 991 1082 1111" y="897 888 892 882 893 883 890">۴۲۴۲۸۲۲</text>
                                        </g>
                                        <g class="digits digits-l">
                                            <text x="654 840 1033" y="516 516 500">۲۲۴</text>
                                            <text x="950 1154 1167" y="546 550 550">۴۲۵</text>
                                            <text x="1010 659" y="784 908">۸۸</text>
                                        </g>
                                    </svg>
                                    <div class="an-scroll">
                                        <svg class="up"><use href="#i-chev"/></svg>
                                        <span></span>
                                        <svg><use href="#i-chev"/></svg>
                                    </div>
                                </div>
                                <svg class="grip grip-side" viewBox="0 0 8 12"><path d="M1 1v10M4 1v10M7 1v10" stroke="#888" stroke-width="1.500" stroke-dasharray="2 2"/></svg>
                            </div>
                        </div>
                        <div class="an-bar an-status">
                            <span class="state">Modified</span>
                            <span class="blank"></span>
                            <button aria-label="Previous note"><svg viewBox="0 0 20 20"><path d="M1 1h13l5 5v11H1z" fill="#eeae48"/><path d="M8 15H1M4 12l-3 3 3 3" stroke="#1878cc" stroke-width="2" fill="none"/></svg></button>
                            <button aria-label="Next note"><svg viewBox="0 0 20 20"><path d="M1 1h11l4 4v12H1z" fill="#b9b9b9"/><path d="M9 15h9M15 12l3 3-3 3" stroke="#aaa" stroke-width="2" fill="none"/></svg></button>
                            <i class="sep"></i>
                            <button aria-label="First page"><svg viewBox="0 0 20 20"><circle cx="10" cy="10" r="9.500" fill="#0d74cf"/><path d="M6 5v10M16 10H8M12 6l-4 4 4 4" fill="none" stroke="#fff" stroke-width="2"/></svg></button>
                            <button aria-label="Previous page"><svg viewBox="0 0 20 20"><circle cx="10" cy="10" r="9.500" fill="#0d74cf"/><path d="M16 10H5M10 5l-5 5 5 5" fill="none" stroke="#fff" stroke-width="2"/></svg></button>
                            <input class="page-no" type="text" value="2 of 2" aria-label="Page">
                            <button aria-label="Next page"><svg viewBox="0 0 20 20"><circle cx="10" cy="10" r="9" fill="#bcbcbc"/><path d="M4 10h11M10 5l5 5-5 5" fill="none" stroke="#f1f0f2" stroke-width="2"/></svg></button>
                            <button aria-label="Last page"><svg viewBox="0 0 20 20"><circle cx="10" cy="10" r="9" fill="#bcbcbc"/><path d="M15 5v10M4 10h8M8 6l4 4-4 4" fill="none" stroke="#f1f0f2" stroke-width="2"/></svg></button>
                            <i class="sep"></i>
                            <button aria-label="Back"><svg viewBox="0 0 20 20"><circle cx="10" cy="10" r="8.500" fill="none" stroke="#0d74cf" stroke-width="1.500"/><path d="M16 10H5M9 6l-4 4 4 4" fill="none" stroke="#0d74cf" stroke-width="2"/></svg></button>
                            <button aria-label="Forward"><svg viewBox="0 0 20 20"><circle cx="10" cy="10" r="8.500" fill="none" stroke="#bcbcbc" stroke-width="1.500"/><path d="M4 10h11M11 6l4 4-4 4" fill="none" stroke="#bcbcbc" stroke-width="2"/></svg></button>
                            <span class="push"></span>
                            <i class="sep"></i>
                            <button aria-label="Single page"><svg viewBox="0 0 20 20"><path d="M1 1h18v18H1z" fill="#cfe3f3" stroke="#4489bd" stroke-width="1.500"/><path d="M5 4h10v12H5z" fill="#fff" stroke="#777"/><path d="M7 7h6M7 10h6M7 13h6" stroke="#999"/></svg></button>
                            <button class="sel" aria-label="Continuous"><svg viewBox="0 0 20 20"><path d="M1 1h18v18H1z" fill="#cfe3f3" stroke="#4489bd" stroke-width="1.500"/><path d="M5 1v7h10V1M5 19v-7h10v7" fill="#fff" stroke="#777"/><path d="M7 5h6M7 15h6" stroke="#999"/></svg></button>
                            <button aria-label="Two continuous"><svg viewBox="0 0 20 20"><path d="M1 1h18v18H1z" fill="#cfe3f3" stroke="#4489bd" stroke-width="1.500"/><path d="M3 2h6v6H3zM11 2h6v6h-6zM3 12h6v6H3zM11 12h6v6h-6z" fill="#fff" stroke="#777"/></svg></button>
                            <button aria-label="Two pages"><svg viewBox="0 0 20 20"><path d="M1 1h18v18H1z" fill="#cfe3f3" stroke="#4489bd" stroke-width="1.500"/><path d="M4 4h5v12H4zM11 4h5v12h-5z" fill="#fff" stroke="#777"/></svg></button>
                            <svg class="corner" viewBox="0 0 8 8"><path d="M0 2h8M0 6h8" stroke="#777" stroke-width="2" stroke-dasharray="2 3"/></svg>
                        </div>
                    </div>
                </div>
            </section>

            <aside class="side">
                <section class="panel">
                    <div class="panel-head">
                        <svg><use href="#i-users"/></svg>
                        <h2 dir="rtl">کاربران</h2>
                        <svg class="kebab"><use href="#i-dots"/></svg>
                    </div>
                    <div class="panel-body users">
                        <div class="filters">
                            <button class="f-icon" aria-label="Filter"><svg viewBox="0 0 16 16"><path d="M0 0h16l-6 8v7l-4-2V8z"/></svg></button>
                            <button class="f-hand" aria-label="Raised hands"><svg><use href="#i-hand"/></svg></button>
                            <button class="f-count"><svg><use href="#i-users"/></svg>6</button>
                        </div>
                        <ul>
                            <li><svg class="act pin" viewBox="0 0 16 16"><path d="M9 0l7 7-2 1-1-1-2 3 0 4-2 0-3-4-5 6-1-1 6-5-4-3v-1l4-1 4-3-1-1z"/></svg><span dir="rtl"><b>دبیرستان باهر</b></span><svg class="u red"><use href="#i-user"/></svg></li>
                            <li><span dir="rtl">مهدي غفاري12t</span><svg class="u green"><use href="#i-user"/></svg></li>
                            <li class="live"><svg class="act white"><use href="#i-mic"/></svg><svg class="act"><use href="#i-share"/></svg><span dir="rtl">استاد کشاورز</span><svg class="u"><use href="#i-user"/></svg></li>
                            <li><span dir="rtl">استاد چپردار</span><svg class="u"><use href="#i-user"/></svg></li>
                            <li class="live"><svg class="act"><use href="#i-mic"/></svg><span dir="rtl">میلاد آهنگري12t</span><svg class="u"><use href="#i-user"/></svg></li>
                            <li><span dir="rtl">پارسا زارع فر12t</span><svg class="u green"><use href="#i-user"/></svg></li>
                        </ul>
                    </div>
                </section>

                <section class="panel">
                    <div class="panel-head">
                        <svg><use href="#i-chat"/></svg>
                        <h2 dir="rtl">پیام‌ها</h2>
                        <svg class="kebab"><use href="#i-dots"/></svg>
                    </div>
                    <div class="panel-body chat">
                        <div class="bubble tail w-l">
                            <div class="quote"><span dir="rtl">حرف سیاسی نزن</span><svg><use href="#i-reply"/></svg></div>
                            <p dir="rtl">الان میکننم تو گونی</p>
                        </div>
                        <div class="who"><svg class="u"><use href="#i-user"/></svg><b><bdi>میلاد آهنگري</bdi>12t</b><time>۱۰:۵۵</time></div>
                        <div class="bubble tail w-m">
                            <div class="quote"><span dir="rtl">الان میکننم تو گونی</span><svg><use href="#i-reply"/></svg></div>
                            <p dir="rtl">شایدم بدون گونی</p>
                        </div>
                        <div class="who"><svg class="u green"><use href="#i-user"/></svg><b><bdi>پارسا زارع فر</bdi>12t</b><time>۱۰:۵۹</time></div>
                        <div class="bubble tail w-s"><p dir="rtl">بعدی این من بیام؟</p></div>
                        <div class="bubble w-s"><p dir="rtl">سوال ۹</p></div>
                        <span class="thumb"></span>
                    </div>
                    <form class="compose">
                        <button class="send" type="button" aria-label="Send"><svg viewBox="0 0 20 20"><path d="M20 0v20L0 10z"/><path d="M20 10h-9" stroke="#141c26" stroke-width="2"/></svg></button>
                        <input type="text" dir="rtl" placeholder="پیام خود را بنویسید" aria-label="پیام">
                        <button class="smile" type="button" aria-label="Emoji"><svg viewBox="0 0 20 20"><circle cx="10" cy="10" r="9" fill="none" stroke="currentColor" stroke-width="1.500"/><circle cx="7" cy="7.500" r="1.300"/><circle cx="13" cy="7.500" r="1.300"/><path d="M5 11.500h10c-1 5-9 5-10 0z"/></svg></button>
                    </form>
                </section>
            </aside>
        </div>
    </main>

    <footer class="taskbar">
        <button aria-label="Start"><svg viewBox="0 0 36 36"><defs><radialGradient id="orb"><stop offset="0" stop-color="#4aa7dc"/><stop offset="1" stop-color="#12365c"/></radialGradient></defs><circle cx="18" cy="18" r="17" fill="url(#orb)" stroke="#8fb8d6"/><path d="M3 14a16 16 0 0 1 30 0c-10 4-20 4-30 0z" fill="#c6dced" opacity=".55"/><path d="M10 11c3-2 5-1 8 0l-2 7c-3-1-5-1-8 0z" fill="#e8602c"/><path d="M19 11c3 1 5 1 8-1l-2 8c-3 1-5 1-8 0z" fill="#8cc43e"/><path d="M8 19c3-1 5-1 8 0l-2 7c-2-1-5-1-8 0z" fill="#3fa0e4"/><path d="M17 19c3 1 5 1 8 0l-2 7c-3 1-5 1-8 0z" fill="#f8c832"/></svg></button>
        <button aria-label="Internet Explorer"><svg viewBox="0 0 32 32"><path d="M26 21c-3 8-18 7-18-3S25 6 26 18H12" fill="none" stroke="#6fd0f7" stroke-width="5.500"/><path d="M5 30c-9 0 8-26 20-28 5 0 4 4 3 6" fill="none" stroke="#f3c32b" stroke-width="2.500"/></svg></button>
        <button aria-label="Explorer"><svg viewBox="0 0 32 32"><path d="M1 5h10l2 2h16v21H1z" fill="#e8cd72"/><path d="M4 3h6v5H4z" fill="#4bae4e"/><path d="M12 5h6v4h-6z" fill="#c85d3b"/><path d="M2 10h29l-1 19H2z" fill="#f7e6a4"/><path d="M8 29v-7a4 4 0 0 1 4-3h10a4 4 0 0 1 4 3v7" fill="none" stroke="#8cc8ec" stroke-width="4"/></svg></button>
        <button aria-label="Media Player"><svg viewBox="0 0 32 32"><path d="M4 4h22v24H4zM27 5h2v22h-2zM30 6h1v20h-1z" fill="#9dcbe6"/><circle cx="15" cy="16" r="9.500" fill="#ee7b1e"/><path d="M12 10v12l9-6z" fill="#fff"/></svg></button>
        <button class="open" aria-label="Chrome"><svg viewBox="0 0 32 32"><circle cx="16" cy="16" r="15" fill="#fcc934"/><path d="M16 16L3 8.500A15 15 0 0 1 29 8.500z" fill="#db4437"/><path d="M16 16L3 8.500A15 15 0 0 0 14 31l7-12z" fill="#1e9e56"/><circle cx="16" cy="16" r="7.500" fill="#fff"/><circle cx="16" cy="16" r="6" fill="#2a6fe8"/></svg></button>
        <button aria-label="Word"><svg viewBox="0 0 32 32"><path d="M4 2h26v28H2V4z" fill="#dce8f6" stroke="#3768ae"/><text x="5" y="22" class="word">W</text><path d="M14 27l14-6 3 8-14 2z" fill="#fff" stroke="#7f9bc5"/></svg></button>
        <button aria-label="Firefox"><svg viewBox="0 0 32 32"><path d="M2 18C1 12 4 9 5 5l4 4c5-3 7-3 9-8 3 3 4 5 5 7l2-1c6 5 7 12 4 17-5 10-25 10-27-6z" fill="#ff5a2c"/><path d="M18 1c4 4 3 7 7 8 5 5 5 12 2 16-4 4-9 3-8 1 9-4 6-15-3-16 2-2 3-4 2-9z" fill="#ffca2f"/><circle cx="16" cy="17" r="6.500" fill="#6b45c9"/><path d="M3 14c4-2 7 0 10 0 0 3-5 3-6 5z" fill="#ff9b25"/></svg></button>
        <button class="open open-dim" aria-label="Paint"><svg viewBox="0 0 36 32"><path d="M3 21c1-9 9-14 19-13 9 1 8 8 4 10-4 1-2 5-5 8-5 5-12 4-11 0 0-3-7 1-7-5z" fill="#e3eff8" stroke="#7da5c4"/><circle cx="8" cy="19" r="2.500" fill="#de4840"/><circle cx="13" cy="13" r="2.500" fill="#59b54d"/><circle cx="20" cy="11" r="2.500" fill="#f2b42c"/><circle cx="16" cy="21" r="2.500" fill="#5aa2d0"/><path d="M21 30L29 9" stroke="#dc8430" stroke-width="3"/><path d="M27 10l1-7 7-1-3 9z" fill="#b98254"/></svg></button>
        <span class="push"></span>
        <div class="tray">
            <span>EN</span>
            <svg class="tri" viewBox="0 0 10 6"><path d="M5 0l5 6H0z"/></svg>
            <svg viewBox="0 0 16 16"><path d="M1 0h1.500v16H1zM3 1h6v2h6l-2 3 1 3H8V7H3z"/></svg>
            <svg viewBox="0 0 16 16"><path d="M0 12h2v3H0zM3 10h2v5H3zM6 8h2v7H6zM9 5h2v10H9zM12 2h3v13h-3z"/></svg>
            <svg viewBox="0 0 16 16"><path d="M1 5h3l4-4v14l-4-4H1z"/><path d="M10 6c1 1 1 3 0 4M12 4c2 2 2 6 0 8M14 3c2.500 3 2.500 7 0 10" fill="none" stroke="#fff"/></svg>
            <div class="clock">11:04 AM<br>2/4/2026</div>
        </div>
        <button class="peek" aria-label="Show desktop"></button>
    </footer>
</body>
</html>
```

FILE: styles.css
```css
* {
    box-sizing: border-box;
}
body {
    margin: 0;
    height: 100vh;
    display: flex;
    flex-direction: column;
    overflow: hidden;
    background: #111820;
    color: #e4e7eb;
    font-family: "Open Sans", "DejaVu Sans", sans-serif;
    font-size: 13px;
}
button {
    display: flex;
    align-items: center;
    justify-content: center;
    flex-shrink: 0;
    margin: 0;
    padding: 0;
    border: none;
    background: none;
    color: inherit;
    font-family: inherit;
    cursor: pointer;
}
svg {
    flex-shrink: 0;
    fill: currentColor;
}
a {
    color: inherit;
    text-decoration: none;
}
h1, h2, p, ul {
    margin: 0;
    padding: 0;
    font-weight: normal;
}
.sprite {
    position: absolute;
    width: 0;
    height: 0;
}
.push {
    flex: 1;
}

/* --- BROWSER --- */
.browser {
    height: 103px;
    background: #fff;
    border-bottom: 1px solid #cfd3d8;
    color: #3c4043;
}
.tab-strip {
    display: flex;
    align-items: center;
    height: 34px;
    padding-left: 8px;
    background: linear-gradient(#235a92 0, #23588f 19px, #a4c9ef 25px, #a4c9ef 100%);
}
.tab {
    display: flex;
    align-items: center;
    gap: 4px;
    width: 239px;
    height: 34px;
    padding: 0 8px 0 12px;
    border-radius: 8px 8px 0 0;
    background: #dee1e6;
    font-size: 10px;
}
.tab-line {
    border-left: 1px solid #84898f;
}
.tab-active {
    background: #fff;
}
.favicon {
    width: 16px;
    height: 16px;
}
.tab-title {
    flex: 1;
    overflow: hidden;
    white-space: nowrap;
}
.tab-fade {
    mask-image: linear-gradient(to right, transparent, #000 20px);
}
.tab-x svg {
    width: 16px;
    height: 16px;
}
.speaker {
    width: 12px;
    height: 12px;
}
.round-btn {
    width: 28px;
    height: 28px;
    margin-left: 8px;
    border-radius: 14px;
    background: #dfe2e7;
}
.round-btn svg {
    width: 13px;
    height: 13px;
}
.tab-search {
    margin-left: auto;
}
.win-controls {
    display: flex;
    align-self: flex-start;
    margin: 0 3px 0 9px;
    border: 1px solid #dfe8f2;
    border-top: none;
    border-radius: 0 0 5px 5px;
    background: linear-gradient(#8ca3c2, #4e6f9c 50%, #7693b9);
}
.win-controls button {
    width: 28px;
    height: 17px;
    border-right: 1px solid #dfe8f2;
}
.win-controls svg {
    width: 18px;
    height: 12px;
}
.win-controls .win-close {
    width: 46px;
    border-right: none;
    background: linear-gradient(#d58d7d, #b8301a 50%, #d0593f);
}
.nav-bar {
    display: flex;
    align-items: center;
    height: 36px;
    padding: 0 6px 0 5px;
}
.nav-bar button {
    width: 32px;
    height: 28px;
}
.nav-bar svg {
    width: 16px;
    height: 16px;
}
.omnibox {
    display: flex;
    flex: 1;
    align-items: center;
    gap: 16px;
    height: 28px;
    margin: 0 7px;
    padding: 0 9px 0 10px;
    border-radius: 14px;
    background: #f1f3f4;
}
.url {
    flex: 1;
    margin-left: -8px;
    color: #202124;
}
.url span {
    color: #6a6e73;
}
.nav-bar .avatar {
    width: 22px;
    height: 22px;
    margin: 0 5px;
    border-radius: 11px;
    background: #455a64;
    color: #fff;
    font-size: 12px;
}
.nav-bar .kebab {
    width: 4px;
    height: 14px;
}
.bookmarks {
    display: flex;
    align-items: center;
    height: 28px;
    padding-left: 14px;
    gap: 17px;
    font-size: 11px;
}
.bookmarks a {
    display: flex;
    align-items: center;
    gap: 8px;
}
.bookmarks span {
    font-size: 10px;
}
.bookmarks svg {
    width: 16px;
    height: 16px;
}

/* --- ROOM --- */
.room {
    display: flex;
    flex: 1;
    flex-direction: column;
    min-height: 0;
    padding: 0 10px 11px;
}
.room-head {
    display: flex;
    align-items: center;
    height: 47px;
    padding: 0 13px 0 16px;
}
.signal {
    width: 15px;
    height: 15px;
    margin-left: 18px;
}
.room-head h1 {
    margin-left: auto;
    font-size: 15px;
}
.logo {
    width: 50px;
    height: 20px;
    margin-left: 15px;
}
.toolbar {
    display: flex;
    align-items: center;
    gap: 10px;
    height: 57px;
    padding: 0 10px;
    border-radius: 12px;
    background: #243449;
}
.tool {
    display: flex;
    align-items: center;
    justify-content: center;
    width: 36px;
    height: 36px;
    border-radius: 6px;
    background: #1c2937;
    color: #d9dadc;
}
.tool svg {
    width: 18px;
    height: 18px;
}
.tool .big {
    width: 22px;
    height: 22px;
}
.on {
    background: #111820;
    color: #2bb8d9;
}
.dim {
    color: #44546b;
}
.tool-wide {
    justify-content: flex-start;
    width: 57px;
    padding-left: 2px;
}
.tool-inner {
    width: 32px;
    height: 32px;
    border-radius: 6px;
    background: #19242f;
}
.tool .caret {
    width: 9px;
    height: 5px;
    margin-left: 6px;
    color: #44546b;
}
.panes {
    display: flex;
    flex: 1;
    gap: 12px;
    min-height: 0;
    margin-top: 10px;
}
.panel {
    display: flex;
    flex: 1;
    flex-direction: column;
    min-height: 0;
    padding: 0 5px 5px;
    border-radius: 12px;
    background: #243449;
}
.panel-head {
    display: flex;
    align-items: center;
    flex-shrink: 0;
    height: 32px;
    padding: 0 4px 0 2px;
}
.panel-head svg {
    width: 13px;
    height: 13px;
}
.panel-head h2 {
    margin-left: auto;
    font-size: 12px;
}
.panel-head .kebab {
    width: 4px;
    margin: 0 4px 4px 13px;
}
.panel-body {
    position: relative;
    flex: 1;
    min-height: 0;
    border-radius: 8px;
    background: #141c26;
}
.stage-body {
    display: flex;
    justify-content: center;
}
.brand {
    position: absolute;
    left: 5px;
    bottom: 9px;
    padding: 0 5px;
    border-radius: 4px;
    background: #222d3d;
    font-size: 12px;
    line-height: 24px;
}
.side {
    display: flex;
    flex-direction: column;
    gap: 10px;
    width: 380px;
}

/* --- USERS --- */
.users {
    padding: 9px 8px;
}
.filters {
    display: flex;
    gap: 8px;
    margin-bottom: 8px;
}
.filters button {
    flex: 1;
    gap: 10px;
    height: 36px;
    border-radius: 6px;
    background: #272a34;
    font-size: 13px;
}
.filters svg {
    width: 18px;
    height: 18px;
}
.filters .f-icon {
    flex: 0 0 40px;
}
.f-icon svg {
    width: 15px;
}
.filters .f-hand {
    background: #383b46;
    color: #9c9ea3;
}
.filters .f-count {
    border: 1px solid #2bb8d9;
    color: #2bb8d9;
}
.users ul {
    display: flex;
    flex-direction: column;
    gap: 4px;
    list-style: none;
}
.users li {
    display: flex;
    align-items: center;
    gap: 14px;
    height: 32px;
    padding: 0 9px 0 8px;
    border-radius: 6px;
    background: #181d29;
    font-size: 13px;
}
.users .live {
    background: #182432;
}
.users li span {
    margin: 0 -8px 2px auto;
}
.users b {
    font-size: 12px;
}
.act {
    width: 18px;
    height: 18px;
    color: #2bb8d9;
}
.act.pin {
    width: 16px;
    color: #4b5a7c;
}
.act.white {
    color: #fff;
}
.u {
    width: 12px;
    height: 13px;
    color: #2bb8d9;
}
.u.red {
    color: #f25555;
}
.u.green {
    color: #55b765;
}

/* --- CHAT --- */
.chat {
    display: flex;
    flex-direction: column;
    align-items: flex-start;
    padding: 5px 21px;
}
.bubble {
    position: relative;
    padding: 6px 8px 4px;
    border-radius: 7px;
    background: #2c303a;
    font-size: 12px;
}
.bubble p {
    line-height: 24px;
}
.bubble + .bubble {
    margin-top: 10px;
}
.tail {
    border-top-left-radius: 0;
}
.tail::before {
    content: "";
    position: absolute;
    left: -5px;
    top: 0;
    border-top: 8px solid #2c303a;
    border-left: 5px solid transparent;
}
.w-l {
    width: 193px;
}
.w-m {
    width: 167px;
}
.w-s {
    width: 159px;
}
.quote {
    display: flex;
    align-items: center;
    gap: 5px;
    margin-bottom: 8px;
    font-size: 11px;
}
.quote span {
    flex: 1;
    padding: 0 5px;
    border-radius: 5px;
    background: #1d222c;
    line-height: 28px;
}
.quote svg {
    width: 16px;
    height: 14px;
}
.who {
    display: flex;
    align-items: center;
    gap: 9px;
    height: 24px;
    margin: 16px 0 5px -5px;
    font-size: 12px;
}
.chat .w-m + .who {
    margin-top: 22px;
}
.who time {
    margin-left: 6px;
    color: #8d929b;
    font-size: 12px;
}
.thumb {
    position: absolute;
    left: 0;
    bottom: 0;
    width: 8px;
    height: 88px;
    border-radius: 4px;
    background: #5b5e66;
}
.compose {
    display: flex;
    align-items: center;
    height: 36px;
    margin-top: 5px;
    padding: 0 4px 0 9px;
    border-radius: 8px;
    background: #141c26;
}
.compose input {
    flex: 1;
    min-width: 0;
    padding: 0 12px;
    border: none;
    background: none;
    color: #e4e7eb;
    font-family: inherit;
    font-size: 13px;
}
.compose input::placeholder {
    color: #9a9fa8;
}
.send {
    color: #4f6078;
}
.send svg {
    width: 18px;
    height: 18px;
}
.smile {
    width: 28px;
    height: 28px;
    border-radius: 4px;
    background: #233246;
}
.smile svg {
    width: 21px;
    height: 21px;
}

/* --- PDF ANNOTATOR --- */
.annotator {
    display: flex;
    flex-direction: column;
    height: 100%;
    aspect-ratio: 1036 / 776;
    background: #f1f0f2;
    color: #333;
    font-size: 11px;
}
.an-title {
    display: flex;
    align-items: center;
    height: 33px;
    padding-left: 3px;
    font-size: 11px;
}
.an-logo {
    width: 16px;
    height: 16px;
    margin-right: 5px;
}
.an-title button {
    width: 50px;
    height: 32px;
}
.an-title button svg {
    width: 13px;
    height: 13px;
}
.an-bar {
    display: flex;
    align-items: center;
}
.an-bar button {
    width: 28px;
    height: 29px;
    border: 1px solid transparent;
    border-radius: 3px;
}
.an-bar button svg {
    width: 14px;
    height: 14px;
}
.an-bar .sel {
    border-color: #4a8fc9;
    background: #eaf1f7;
}
.an-bar .gray {
    color: #bbb;
}
.chev {
    display: flex;
    justify-content: center;
    width: 16px;
}
.chev svg {
    width: 11px;
    height: 11px;
}
.sep {
    width: 1px;
    height: 25px;
    margin: 0 1px 0 2px;
    background: #cfcfd1;
}
.an-menu {
    height: 37px;
    border-bottom: 2px solid #b9b9b9;
}
.an-menu nav {
    display: flex;
    gap: 9px;
    width: 280px;
    padding-left: 6px;
    font-size: 12px;
}
.an-menu select {
    width: 118px;
    height: 28px;
    padding: 0 6px;
    border: 1px solid #d5d5d7;
    border-radius: 3px;
    appearance: none;
    background:
        linear-gradient(45deg, transparent 42%, #444 42%, #444 58%, transparent 58%) no-repeat right 16px center / 5px 5px,
        linear-gradient(-45deg, transparent 42%, #444 42%, #444 58%, transparent 58%) no-repeat right 12px center / 5px 5px,
        #fff;
    color: #333;
    font-family: inherit;
    font-size: 12px;
}
.an-tabs {
    display: flex;
    height: 32px;
    background: #b8b8b8;
}
.an-tab {
    display: flex;
    align-items: center;
    justify-content: center;
    padding-right: 12px;
    background: #f1f0f2;
    clip-path: polygon(0 0, calc(100% - 18px) 0, 100% 50%, 100% 100%, 0 100%);
}
.tab-a {
    width: 112px;
}
.tab-c {
    width: 207px;
}
.an-current {
    justify-content: flex-start;
    gap: 12px;
    width: 119px;
    padding: 0 0 0 7px;
    border-top: 2px solid #c8502f;
    background: #fff;
    color: #000;
    font-weight: bold;
    clip-path: polygon(0 0, calc(100% - 30px) 0, 100% 100%, 0 100%);
}
.an-current svg {
    width: 13px;
    height: 13px;
    stroke-width: 3px;
}
.an-more {
    width: 28px;
    background: #f1f0f2;
}
.an-more svg {
    width: 6px;
    height: 4px;
}
.an-main {
    display: flex;
    flex: 1;
    min-height: 0;
}
.an-side {
    display: flex;
    flex-direction: column;
    width: 49px;
    padding-bottom: 8px;
}
.an-side button {
    width: 40px;
    height: 41px;
    border-left: 2px solid transparent;
}
.an-side .side-on {
    border-left-color: #d8492a;
    background: #fff;
}
.an-side button svg {
    width: 14px;
    height: 14px;
}
.grip {
    width: 11px;
    height: 7px;
    margin: 0 16px 1px;
}
.an-work {
    position: relative;
    display: flex;
    flex: 1;
    flex-direction: column;
    min-width: 0;
}
.grip-side {
    position: absolute;
    left: -7px;
    top: 311px;
    width: 7px;
    height: 11px;
    margin: 0;
}
.an-tools {
    display: flex;
    height: 67px;
    border-bottom: 1px solid #444;
}
.an-rows {
    flex: 1;
    padding-top: 3px;
}
.an-preview {
    width: 66px;
    background: #fff;
}
.pen-name {
    width: 80px;
    font-size: 12px;
}
.an-bar .ink-color {
    width: 22px;
    height: 22px;
    margin: 0 2px 0 17px;
    border-bottom: 4px solid #1010d8;
    border-radius: 0;
}
.sep.wide {
    margin: 0 14px;
}
.t-under,
.t-wavy,
.t-strike {
    font-family: "Liberation Serif", serif;
    font-size: 14px;
    font-weight: bold;
    text-decoration: underline 2px #d8492a;
}
.t-wavy {
    text-decoration: underline wavy 1px #d8492a;
}
.t-strike {
    text-decoration: line-through 2px #d8492a;
}
.an-doc {
    display: flex;
    flex: 1;
    min-height: 0;
}
.sheet {
    flex: 1;
    min-width: 0;
    height: 100%;
}
.print {
    fill: #111;
    font-family: "DejaVu Sans", sans-serif;
    font-size: 16px;
}
.label {
    fill: #222;
    font: italic bold 18px "Liberation Serif", serif;
}
.stroke {
    fill: none;
    stroke: #1a1fc8;
    stroke-width: 1.5px;
    stroke-linecap: round;
    stroke-linejoin: round;
}
.dot {
    fill: #1414d8;
}
.ink {
    fill: #1a1fc8;
    font: italic 26px "Liberation Serif", serif;
}
.ink-l {
    font-size: 34px;
}
.ink-s {
    font-size: 22px;
}
.digits {
    fill: #1a1fc8;
    font: 18px "DejaVu Sans", sans-serif;
}
.digits-l {
    font-size: 24px;
}
.gl {
    fill: #d8492a;
    font: 12px "Liberation Mono", monospace;
}
.gl-s {
    font-size: 9px;
}
.an-scroll {
    display: flex;
    flex-direction: column;
    align-items: center;
    justify-content: space-between;
    width: 17px;
    padding: 3px 0;
    background: #f1f0f2;
}
.an-scroll svg {
    width: 11px;
    height: 11px;
}
.an-scroll .up {
    transform: rotate(180deg);
}
.an-scroll span {
    width: 15px;
    height: 117px;
    margin-top: 342px;
    background: #cbcbcb;
}
.an-status {
    height: 38px;
}
.an-status button svg {
    width: 13px;
    height: 13px;
}
.state {
    width: 83px;
    padding-left: 4px;
    border-right: 1px solid #cfcfd1;
    line-height: 34px;
}
.blank {
    width: 262px;
    height: 34px;
    border-right: 1px solid #cfcfd1;
}
.page-no {
    width: 40px;
    height: 28px;
    margin: 0 1px;
    padding: 0;
    border: 1px solid #ddd;
    border-radius: 3px;
    background: #fff;
    color: #333;
    font-family: inherit;
    font-size: 11px;
    text-align: center;
}
.corner {
    align-self: flex-end;
    width: 7px;
    height: 7px;
    margin: 0 3px 2px 26px;
}

/* --- TASKBAR --- */
.taskbar {
    display: flex;
    align-items: center;
    height: 39px;
    border-top: 1px solid #7fa9cf;
    background: linear-gradient(to right, #1d5c93 0, #3796cf 70px, #3a97d2 200px, #45a5db 440px, #3b9ad4 700px, #2482c8 1050px, #1d68b5 1400px, #1d64b0 1680px, #123e74 1710px, #123e74 100%);
    color: #fff;
}
.taskbar button {
    width: 62px;
    height: 38px;
}
.taskbar button svg {
    width: 32px;
    height: 32px;
}
.taskbar button:first-child {
    width: 57px;
}
.taskbar button:first-child svg {
    width: 36px;
    height: 36px;
}
.taskbar .open {
    width: 60px;
    margin: 0 1px;
    border: 1px solid #d6e8f4;
    border-radius: 3px;
    background: rgba(220, 238, 248, 0.6);
}
.taskbar .open-dim {
    background: rgba(190, 220, 240, 0.4);
}
.word {
    fill: #1d4c94;
    font: bold 20px "Liberation Serif", serif;
}
.tray {
    display: flex;
    align-items: center;
    gap: 9px;
    font-size: 12px;
}
.tray svg {
    width: 15px;
    height: 15px;
}
.tray .tri {
    width: 8px;
    height: 4px;
    margin: 0 6px 0 10px;
}
.clock {
    margin: 0 8px;
    line-height: 17px;
    text-align: center;
}
.taskbar .peek {
    width: 13px;
    border: 1px solid #7fa0c4;
    background: linear-gradient(#3b659a, #123a6c);
}
```
